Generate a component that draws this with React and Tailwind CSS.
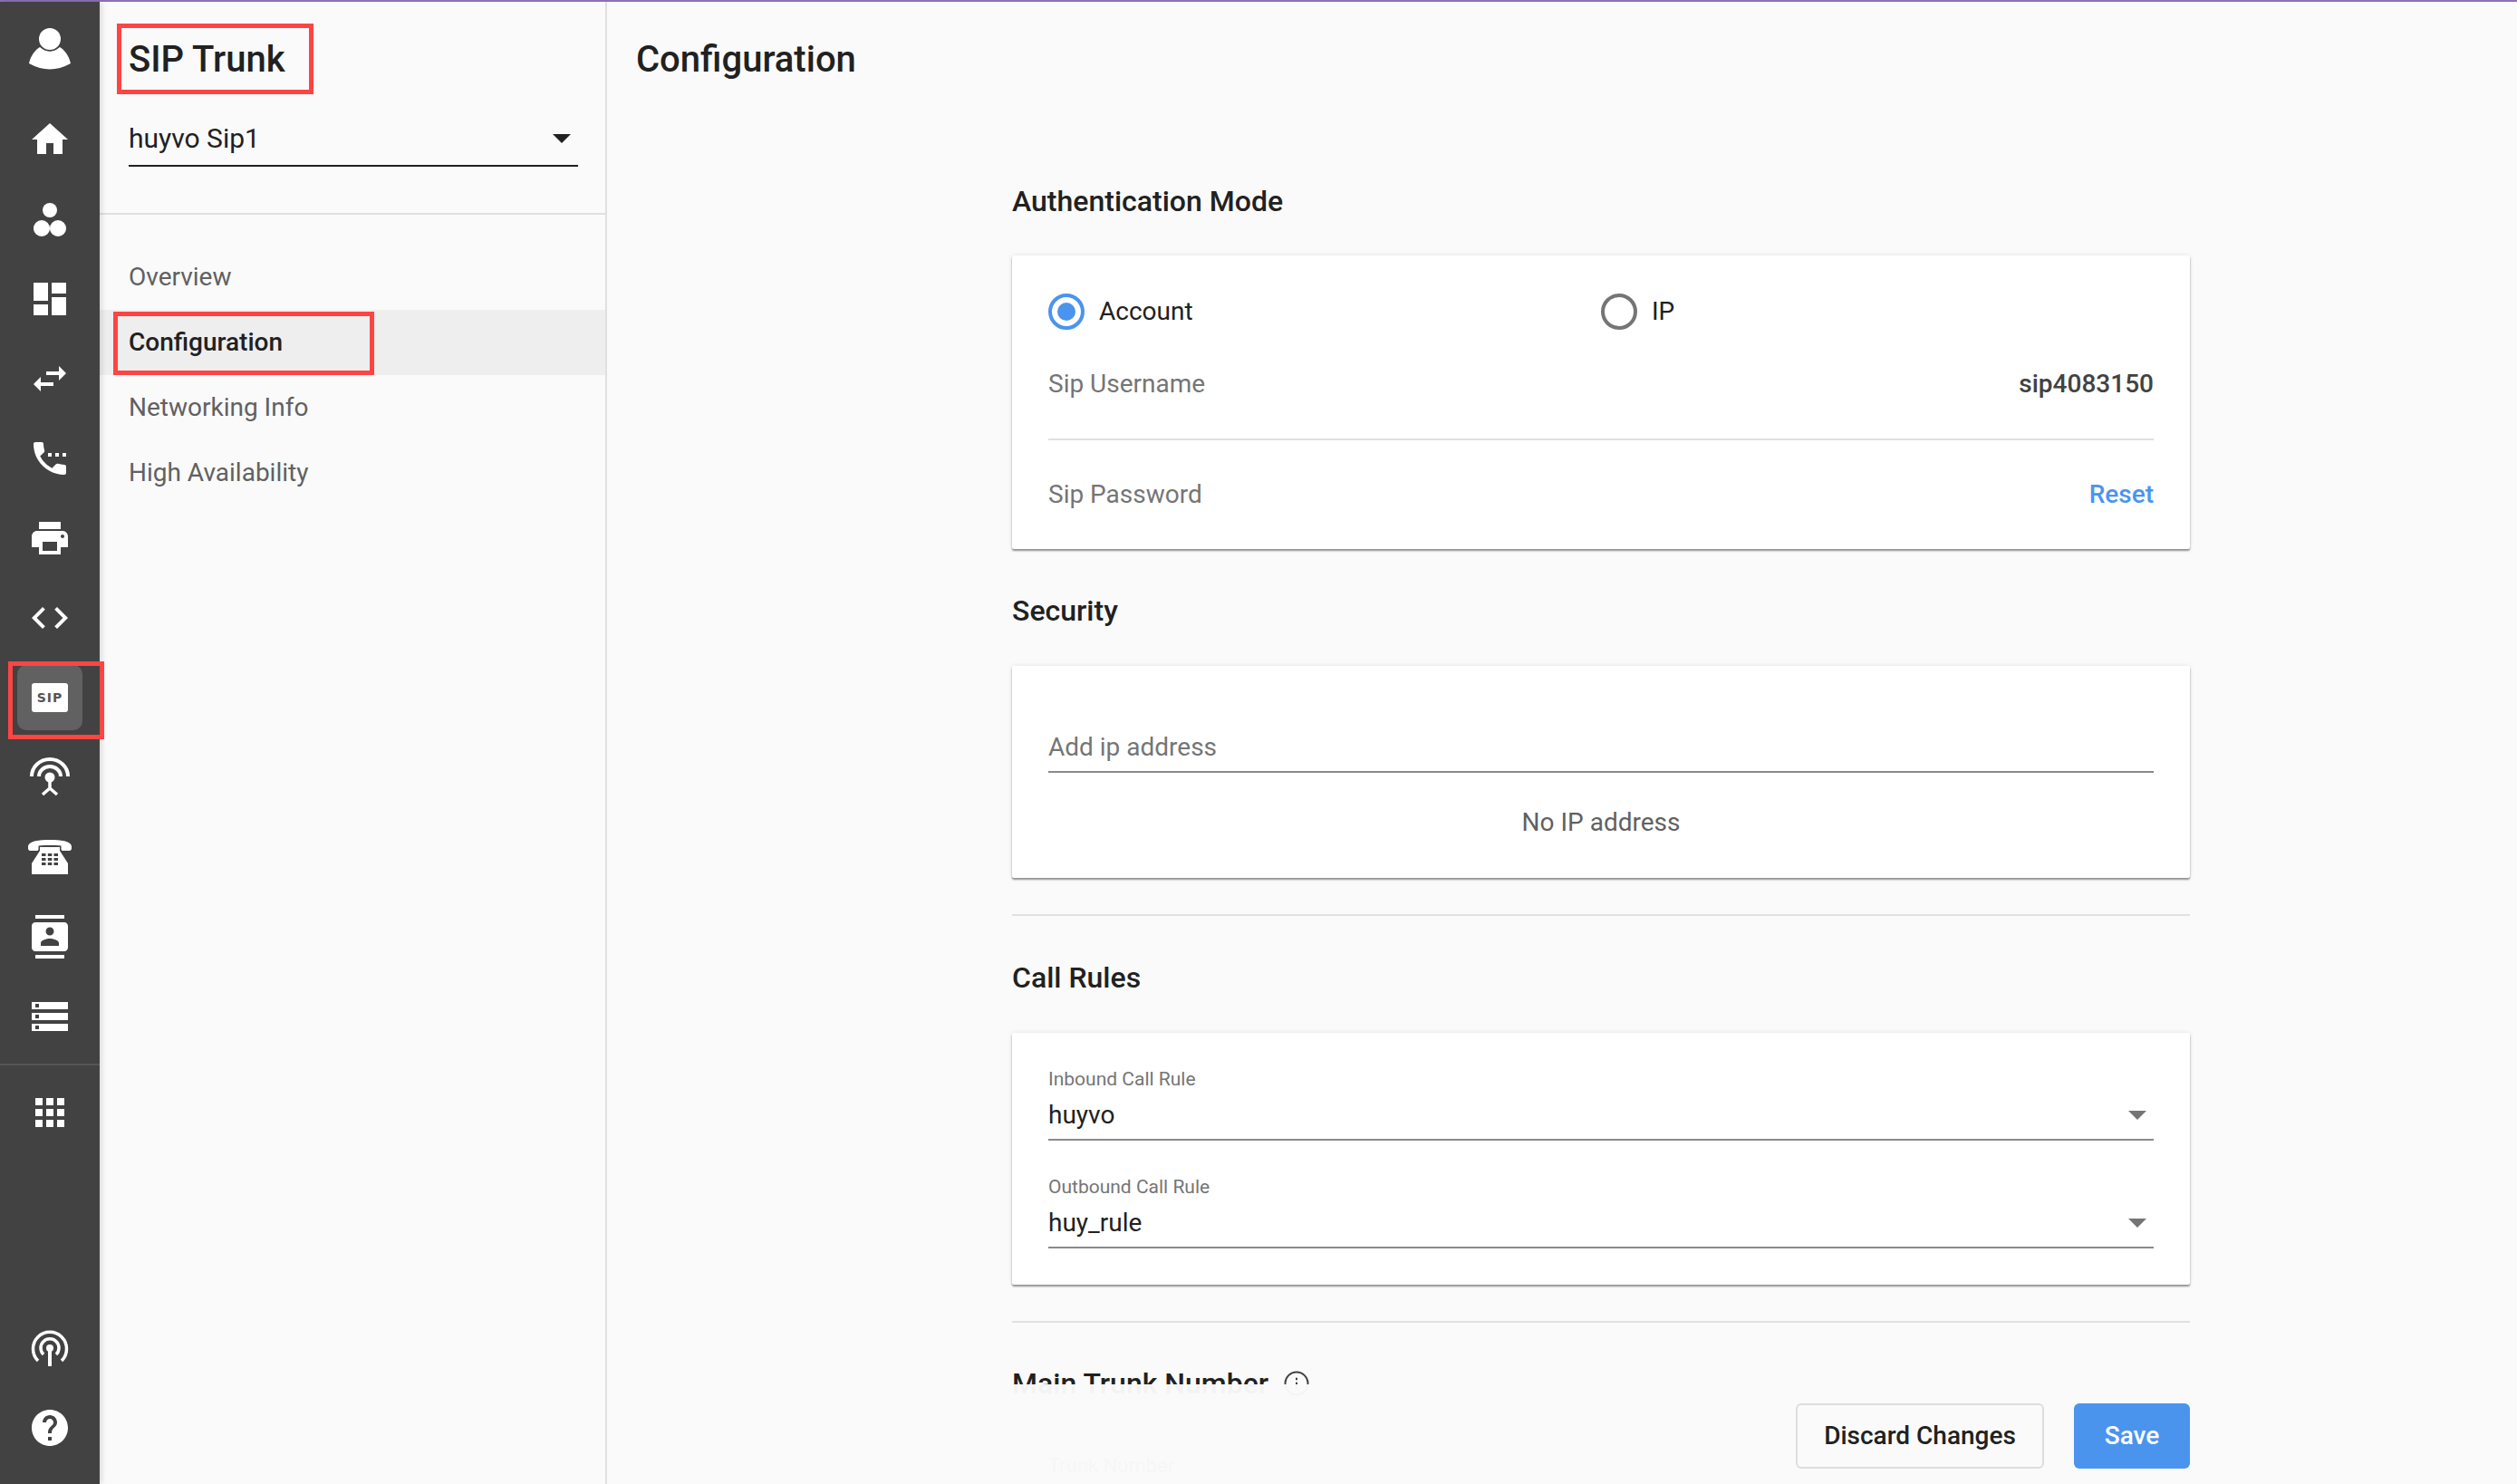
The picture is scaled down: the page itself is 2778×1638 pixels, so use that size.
import React from "react";
import {
  MdHome,
  MdDashboard,
  MdSwapHoriz,
  MdSettingsPhone,
  MdPrint,
  MdCode,
  MdContacts,
  MdStorage,
  MdApps,
  MdHelp,
} from "react-icons/md";

const PersonIcon = () => (
  <svg width="48" height="48" viewBox="0 0 48 48" fill="#fff">
    <path d="M1 41C3 32 8 26 13 23Q24 32 35 23C40 26 45 32 47 41Q24 54 1 41z" />
    <circle cx="24" cy="14" r="13.500" fill="#424242" />
    <circle cx="24" cy="14" r="12" />
  </svg>
);

const DotsIcon = () => (
  <svg width="48" height="48" viewBox="0 0 48 48" fill="#fff">
    <circle cx="24" cy="14" r="8" />
    <circle cx="15" cy="34" r="9" />
    <circle cx="33" cy="34" r="9" />
  </svg>
);

const SipIcon = () => (
  <div className="flex h-[72px] w-[72px] items-center justify-center rounded-[10px] bg-[#616161]">
    <div className="flex h-[32px] w-[40px] items-center justify-center rounded-[3px] bg-white font-['DejaVu_Sans',sans-serif] text-[14px] leading-none font-bold tracking-[1px] text-[#555555]">
      SIP
    </div>
  </div>
);

const BroadcastIcon = () => (
  <svg width="48" height="48" viewBox="0 0 48 48" fill="none" stroke="#fff" strokeWidth="4">
    <path d="M4 23a20 19 0 0 1 40 0" />
    <path d="M12 23a12 11 0 0 1 24 0" />
    <circle cx="24" cy="24" r="5.500" fill="#fff" stroke="none" />
    <path d="M24 24v12M16 43l8-7 8 7" strokeWidth="3.500" />
  </svg>
);

const DeskPhoneIcon = () => (
  <svg width="48" height="48" viewBox="0 0 48 48">
    <path
      fill="#fff"
      d="M0 12C1 6 12 5 24 5s23 1 24 7c.5 3-.5 5-2 5h-8c-1 0-1.500-1-1.500-2v-3.500c-4-.5-8-.5-12.500-.5s-8.500 0-12.500.5V15c0 1-.5 2-1.500 2H2c-1.500 0-2.500-2-2-5z"
    />
    <path fill="#fff" d="M13 13h22v4l9 14v12H4V31l9-14z" />
    <g fill="#424242">
      <rect x="15" y="20" width="4.500" height="3" />
      <rect x="21.800" y="20" width="4.500" height="3" />
      <rect x="28.500" y="20" width="4.500" height="3" />
      <rect x="15" y="25" width="4.500" height="3" />
      <rect x="21.800" y="25" width="4.500" height="3" />
      <rect x="28.500" y="25" width="4.500" height="3" />
      <rect x="15" y="30" width="4.500" height="3" />
      <rect x="21.800" y="30" width="4.500" height="3" />
      <rect x="28.500" y="30" width="4.500" height="3" />
    </g>
  </svg>
);

const AntennaIcon = () => (
  <svg width="48" height="48" viewBox="0 0 48 48" fill="none" stroke="#fff" strokeWidth="3.500">
    <path d="M11 38a18.500 18.500 0 1 1 26 0" />
    <path d="M17 31a10 10 0 1 1 14 0" />
    <circle cx="24" cy="24" r="4" fill="#fff" stroke="none" />
    <path d="M24 24v20" strokeWidth="4" />
  </svg>
);

const railTop = [
  <MdHome size={48} />,
  <DotsIcon />,
  <MdDashboard size={48} />,
  <MdSwapHoriz size={48} />,
  <MdSettingsPhone size={48} />,
  <MdPrint size={48} />,
  <MdCode size={48} />,
  <SipIcon />,
  <BroadcastIcon />,
  <DeskPhoneIcon />,
  <MdContacts size={48} />,
  <MdStorage size={48} />,
];

const RailItem = ({ children }) => (
  <div className="flex h-[88px] items-center justify-center text-white">{children}</div>
);

const navItems = ["Overview", "Configuration", "Networking Info", "High Availability"];

const Heading = ({ children, className = "" }) => (
  <h2 className={`h-[48px] text-[32px] leading-[48px] font-medium text-[#212121] ${className}`}>{children}</h2>
);

const Card = ({ children, className = "" }) => (
  <div className={`rounded-[2px] bg-white px-[40px] shadow-[0_2px_2px_rgba(0,0,0,0.4),0_0_5px_rgba(0,0,0,0.1)] ${className}`}>
    {children}
  </div>
);

const Radio = ({ checked, label, className = "" }) => (
  <div className={`flex items-center gap-[16px] ${className}`}>
    <span
      className={`flex h-[40px] w-[40px] items-center justify-center rounded-full border-[4px] ${
        checked ? "border-[#4a94ee]" : "border-[#757575]"
      }`}
    >
      {checked && <span className="h-[20px] w-[20px] rounded-full bg-[#4a94ee]" />}
    </span>
    <span className="text-[28px] leading-[40px] text-[#212121]">{label}</span>
  </div>
);

const RuleSelect = ({ label, value, className = "" }) => (
  <div className={className}>
    <div className="h-[32px] text-[21px] leading-[32px] text-[#757575]">{label}</div>
    <div className="mt-[4px] flex items-center justify-between border-b-2 border-[#8a8a8a] pb-[6px]">
      <span className="h-[40px] text-[28px] leading-[40px] text-[#212121]">{value}</span>
      <span className="mr-[8px] h-0 w-0 border-x-[10px] border-t-[10px] border-x-transparent border-t-[#757575]" />
    </div>
  </div>
);

export default function App() {
  return (
    <div className="h-[1638px] w-[2778px] overflow-hidden bg-[#fafafa] font-['Roboto',sans-serif]">
      <div className="h-[2px] bg-[#8e6fb5]" />
      <div className="flex h-[1636px]">
        {/* icon rail */}
        <aside className="relative z-10 flex w-[110px] shrink-0 flex-col bg-[#424242] pt-[7px] pb-[18px] shadow-[2px_0_6px_rgba(0,0,0,0.15)]">
          <div className="mb-[13px]">
            <RailItem>
              <PersonIcon />
            </RailItem>
          </div>
          {railTop.map((icon, i) => (
            <RailItem key={i}>{icon}</RailItem>
          ))}
          <div className="mt-[8px] h-[2px] bg-[#555555]" />
          <div className="mt-[8px]">
            <RailItem>
              <MdApps size={48} />
            </RailItem>
          </div>
          <div className="mt-auto">
            <RailItem>
              <AntennaIcon />
            </RailItem>
            <RailItem>
              <MdHelp size={48} />
            </RailItem>
          </div>
        </aside>

        {/* section panel */}
        <div className="relative flex w-[560px] shrink-0 flex-col border-r-2 border-[#e0e0e0]">
          <div className="h-[235px] border-b-2 border-[#e0e0e0] px-[32px] pt-[34px]">
            <div className="h-[60px] text-[40px] leading-[60px] font-medium text-[#212121]">SIP Trunk</div>
            <div className="mt-[34px] flex h-[54px] w-[496px] items-center justify-between border-b-2 border-[#212121] pb-[6px]">
              <span className="text-[30px] leading-[40px] text-[#212121]">huyvo Sip1</span>
              <span className="mr-[8px] h-0 w-0 border-x-[10px] border-t-[10px] border-x-transparent border-t-[#212121]" />
            </div>
          </div>
          <nav className="pt-[33px]">
            {navItems.map((item) => (
              <div
                key={item}
                className={`flex h-[72px] items-center px-[32px] text-[28px] ${
                  item === "Configuration" ? "bg-[#eeeeee] font-medium text-[#212121]" : "text-[#616161]"
                }`}
              >
                {item}
              </div>
            ))}
          </nav>
          {/* red annotation boxes */}
          <div className="absolute top-[24px] left-[19px] h-[78px] w-[217px] border-[5px] border-[#ff4444]" />
          <div className="absolute top-[342px] left-[15px] h-[70px] w-[288px] border-[5px] border-[#ff4444]" />
        </div>

        {/* main */}
        <main className="relative h-full flex-1 overflow-hidden">
          <div className="pt-[34px] pl-[32px]">
            <h1 className="h-[60px] text-[40px] leading-[60px] font-medium text-[#212121]">Configuration</h1>
          </div>
          <div className="ml-[447px] w-[1300px]">
            <Heading className="mt-[102px]">Authentication Mode</Heading>
            <Card className="mt-[36px] pt-[42px] pb-[40px]">
              <div className="grid grid-cols-2">
                <Radio checked label="Account" />
                <Radio label="IP" />
              </div>
              <div className="mt-[40px] flex h-[40px] items-center justify-between text-[28px]">
                <span className="text-[#757575]">Sip Username</span>
                <span className="font-medium text-[#424242]">sip4083150</span>
              </div>
              <div className="mt-[40px] h-[2px] bg-[#e0e0e0]" />
              <div className="mt-[40px] flex h-[40px] items-center justify-between text-[28px]">
                <span className="text-[#757575]">Sip Password</span>
                <span className="font-medium text-[#4a94ee]">Reset</span>
              </div>
            </Card>

            <Heading className="mt-[44px]">Security</Heading>
            <Card className="mt-[37px] pt-[70px] pb-[41px]">
              <div className="border-b-2 border-[#8a8a8a] pb-[6px]">
                <div className="h-[40px] text-[28px] leading-[40px] text-[#757575]">Add ip address</div>
              </div>
              <div className="mt-[35px] h-[40px] text-center text-[28px] leading-[40px] text-[#616161]">No IP address</div>
            </Card>
            <div className="mt-[40px] h-[2px] bg-[#e0e0e0]" />

            <Heading className="mt-[44px]">Call Rules</Heading>
            <Card className="mt-[37px] pt-[35px] pb-[40px]">
              <RuleSelect label="Inbound Call Rule" value="huyvo" />
              <RuleSelect label="Outbound Call Rule" value="huy_rule" className="mt-[35px]" />
            </Card>
            <div className="mt-[40px] h-[2px] bg-[#e0e0e0]" />

            <div className="mt-[43px] flex items-center gap-[16px]">
              <Heading>Main Trunk Number</Heading>
              <svg width="30" height="30" viewBox="0 0 24 24" fill="none" stroke="#424242" strokeWidth="1.600">
                <circle cx="12" cy="12" r="10" />
                <path d="M12 11v6M12 7v2" />
              </svg>
            </div>
            <Card className="mt-[34px] h-[200px] pt-[20px]">
              <div className="text-[22px] leading-[26px] text-[#757575]">Trunk Number</div>
            </Card>
          </div>

          {/* sticky footer, sits over the scrolled content */}
          <div className="absolute right-0 bottom-0 left-0 flex h-[110px] items-start justify-end gap-[33px] bg-[#fafafa]/97 pt-[21px] pr-[361px]">
            <button className="h-[72px] w-[274px] rounded-[6px] border-2 border-[#dddddd] text-[28px] font-medium text-[#212121]">
              Discard Changes
            </button>
            <button className="h-[72px] w-[128px] rounded-[6px] bg-[#4a94ee] text-[28px] font-medium text-white">Save</button>
          </div>
        </main>
      </div>

      {/* red box around the SIP rail item */}
      <div className="absolute top-[730px] left-[9px] z-20 h-[86px] w-[106px] border-[5px] border-[#ff4444]" />
    </div>
  );
}
